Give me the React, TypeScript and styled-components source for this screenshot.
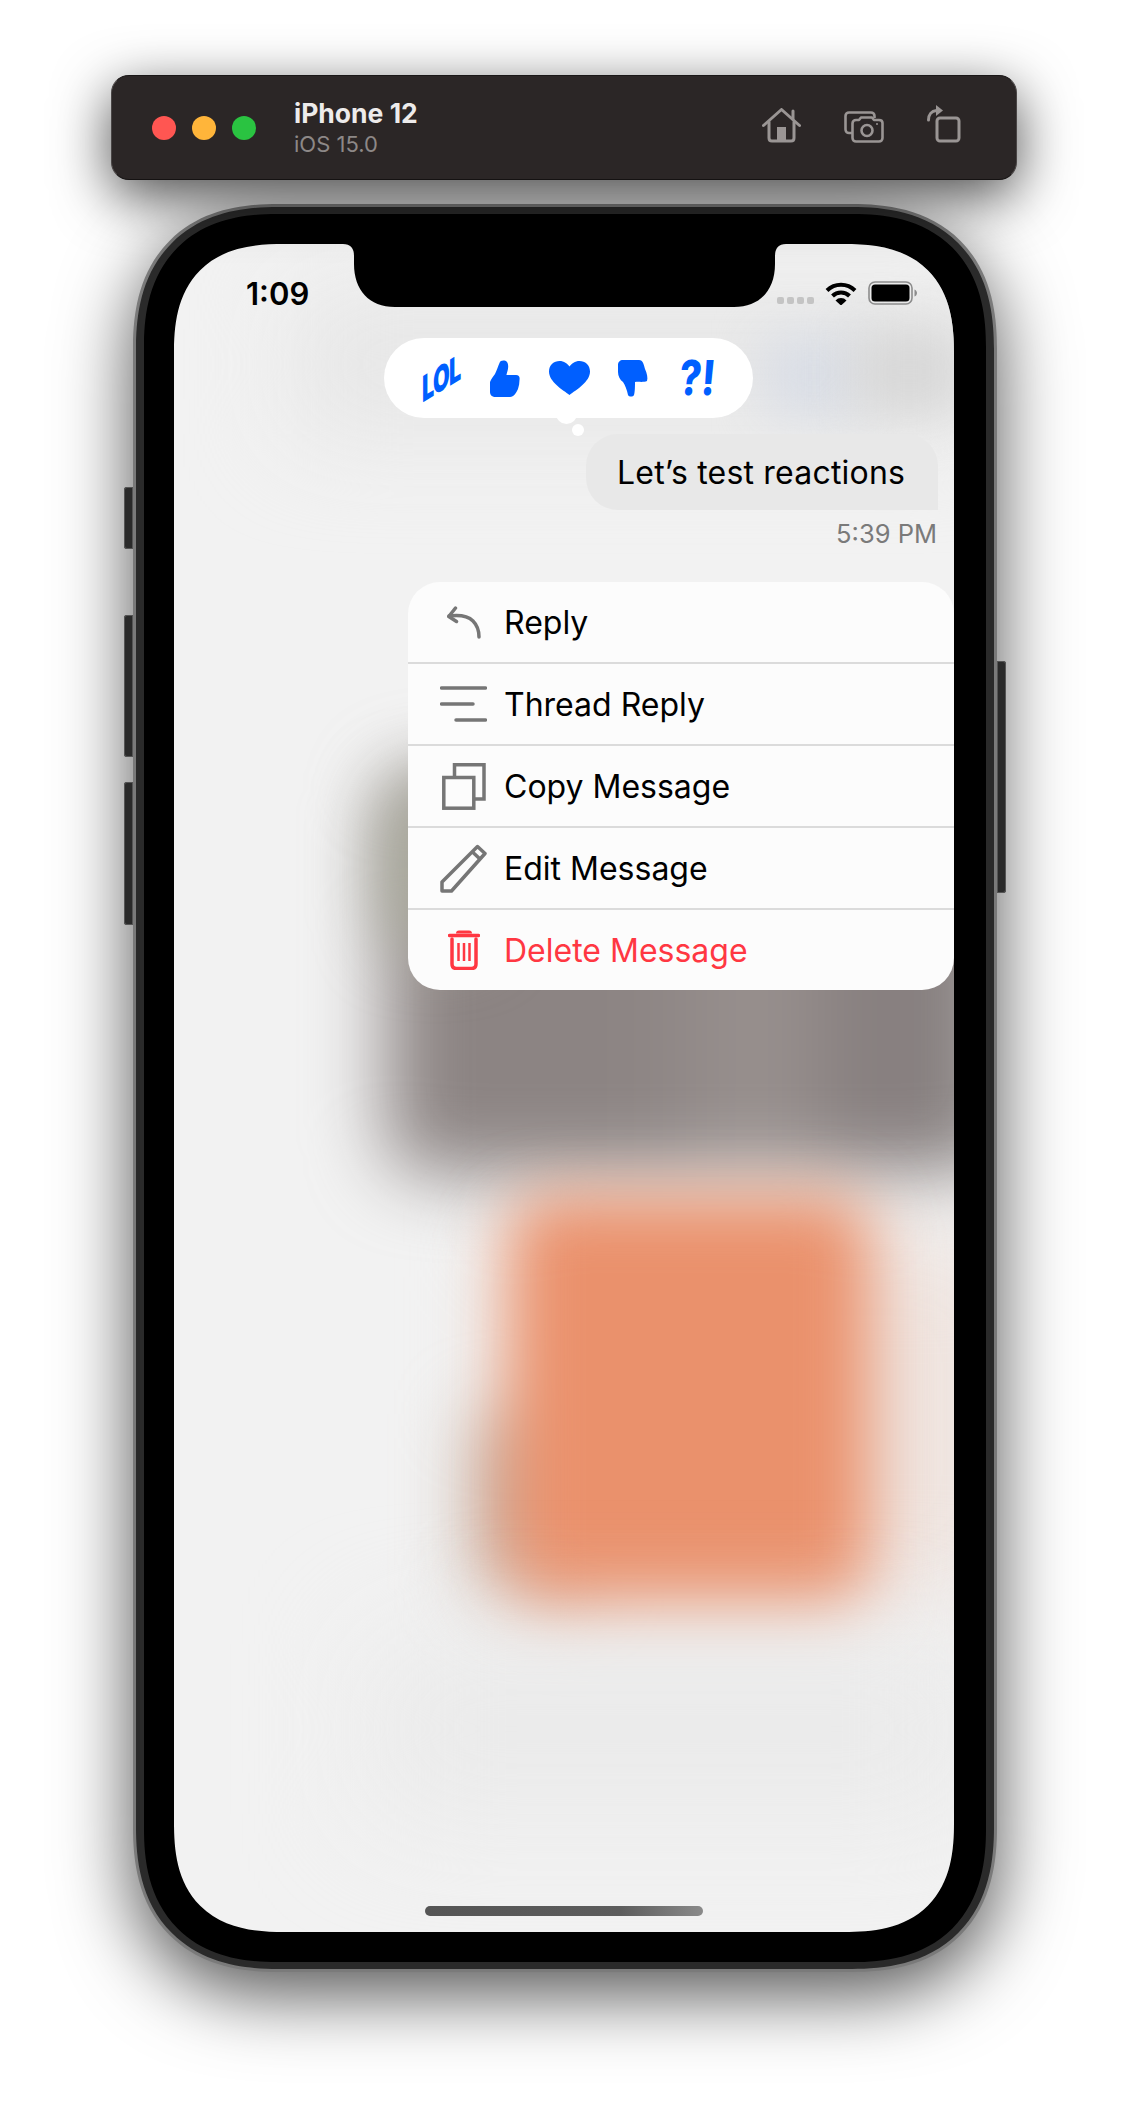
import styled, {createGlobalStyle} from 'styled-components';

const GlobalStyle = createGlobalStyle`
  html, body {
    margin: 0;
    padding: 0;
    background: #FFFFFF;
  }
  body {
    width: 1128px;
    height: 2124px;
    overflow: hidden;
    font-family: Inter, "Liberation Sans", sans-serif;
  }
`;

const menuItems = [
  {label: 'Reply', icon: <ReplyIcon />},
  {label: 'Thread Reply', icon: <ThreadIcon />},
  {label: 'Copy Message', icon: <CopyIcon />},
  {label: 'Edit Message', icon: <EditIcon />},
  {label: 'Delete Message', icon: <TrashIcon />, danger: true},
];

function HomeIcon() {
  return (
    <svg width="39" height="35" viewBox="0 0 39 35" fill="none" stroke="#9A9594" strokeWidth="3" strokeLinecap="round" strokeLinejoin="round">
      <path d="M1.5 17.5 19.5 1.5 37.5 17.5" />
      <path d="M31 3v8" />
      <path d="M7 14v16c0 2 1 3 3 3h19c2 0 3-1 3-3V14" />
      <path d="M15 19h9v14h-9z" fill="#9A9594" stroke="none" />
    </svg>
  );
}

function CameraIcon() {
  return (
    <svg width="40" height="32" viewBox="0 0 40 32" fill="none" stroke="#9A9594" strokeWidth="2.6" strokeLinejoin="round">
      <path d="M8 22H5c-2 0-3.5-1.5-3.500-3.500V5C1.500 3 3 1.500 5 1.500h22c2 0 3.500 1.500 3.500 3.500v2" />
      <path d="M12 9h3l2-2.500h11l2 2.500h5c2 0 3.500 1 3.500 3v15c0 2-1.500 3.500-3.500 3.500H12c-2 0-3.500-1.500-3.500-3.500V12.500C8.500 10.500 10 9 12 9z" />
      <circle cx="23" cy="19.500" r="5.500" />
      <circle cx="33" cy="13" r="1" fill="#9A9594" stroke="none" />
    </svg>
  );
}

function RotateIcon() {
  return (
    <svg width="34" height="38" viewBox="0 0 34 38" fill="none" stroke="#9A9594" strokeWidth="3" strokeLinejoin="round">
      <rect x="10" y="13" width="22" height="23" rx="3" />
      <path d="M1.500 15c0-5 3-9 8-9.500" strokeLinecap="round" />
      <path d="M9 0l7 5.500-7 5.500z" fill="#9A9594" stroke="none" />
    </svg>
  );
}

function WifiIcon() {
  return (
    <svg width="32" height="24" viewBox="0 0 32 24" fill="none" stroke="#000000" strokeWidth="4">
      <path d="M2 9.500a20 20 0 0 1 28 0" />
      <path d="M7.500 15a12 12 0 0 1 17 0" />
      <path d="M10.500 19.500a7.500 7.500 0 0 1 11 0L16 24.500z" fill="#000000" stroke="none" />
    </svg>
  );
}

function BatteryIcon() {
  return (
    <svg width="49" height="24" viewBox="0 0 49 24" fill="none">
      <rect x="1" y="1" width="43" height="22" rx="6" stroke="#8C8C8C" strokeWidth="1.600" />
      <rect x="3.500" y="3.500" width="38" height="17" rx="3.500" fill="#000000" />
      <path d="M46.500 8.500c1.500.5 2.500 2 2.500 3.500s-1 3-2.500 3.500z" fill="#8C8C8C" />
    </svg>
  );
}

function ThumbUpIcon() {
  return (
    <svg width="30" height="37" viewBox="0 0 30 37" fill="#005FFF">
      <path d="M0 22C1 19 3 17 5 14C7 10 8 6 9.500 3C10.500 0 15 0 17 2C18.500 4 18.500 8 17.500 11C17 13 16.500 14 16.500 15H26C29 15 30 17 29.500 20C29.500 23 29 26 28 29C26 33 24 37 20 37H6C2 37 0 35 0 32Z" />
    </svg>
  );
}

function HeartIcon() {
  return (
    <svg width="41" height="34" viewBox="0 0 41 34" fill="#005FFF">
      <path d="M20.500 34C14 29 0 21 0 10.500C0 4 5 0 10.500 0C15 0 18.500 2.500 20.500 5.500C22.500 2.500 26 0 30.500 0C36 0 41 4 41 10.500C41 21 27 29 20.500 34Z" />
    </svg>
  );
}

function ThumbDownIcon() {
  return (
    <svg width="30" height="37" viewBox="0 0 30 37" fill="#005FFF">
      <path d="M5 0H21C25 0 26 5 27 9C29 13 30 18 29 21C26 22.500 21 21.500 17 22C17 26 17 32 16 35C15 37 11 37 10 35C9 30 7 25 5 22C2 20 0 16 0 12V5C0 2 2 0 5 0Z" />
    </svg>
  );
}

function ReplyIcon() {
  return (
    <svg width="34" height="33" viewBox="0 0 34 33" fill="none" stroke="#767676" strokeWidth="3.500" strokeLinecap="round" strokeLinejoin="round">
      <path d="M8.500 2 1.800 10.500 9.500 15.500" />
      <path d="M2 10C10 9 20 9 26 15C30 19 32 24 32 31" />
    </svg>
  );
}

function ThreadIcon() {
  return (
    <svg width="47" height="36" viewBox="0 0 47 36" fill="none" stroke="#767676" strokeWidth="3.500" strokeLinecap="round">
      <path d="M1.500 2H45.500" />
      <path d="M1.500 18H33" />
      <path d="M16 34H45.500" />
    </svg>
  );
}

function CopyIcon() {
  return (
    <svg width="44" height="47" viewBox="0 0 44 47" fill="none" stroke="#767676" strokeWidth="3.500">
      <path d="M12.500 13V1.800H42V36H33" />
      <rect x="1.800" y="14.500" width="30" height="30.700" />
    </svg>
  );
}

function EditIcon() {
  return (
    <svg width="47" height="49" viewBox="0 0 47 49" fill="none" stroke="#767676" strokeWidth="3.500" strokeLinejoin="round">
      <path d="M2 47V38L37.500 2.500 45 9.500 11.500 47Z" />
      <path d="M32.500 8 40.500 15.500" />
    </svg>
  );
}

function TrashIcon() {
  return (
    <svg width="32" height="40" viewBox="0 0 32 40" fill="none" stroke="#FF3742" strokeWidth="3.500" strokeLinecap="round">
      <path d="M8 3.500c0-2 1-3 3-3h10c2 0 3 1 3 3z" fill="#FF3742" stroke="none" />
      <path d="M1.500 5.500H30.500" />
      <path d="M4 9V34C4 37 6 38.500 8.500 38.500H23.500C26 38.500 28 37 28 34V9" />
      <path d="M10.500 13V31M16 13V31M21.500 13V31" strokeWidth="2.500" strokeLinecap="butt" />
    </svg>
  );
}

const App = () => (
  <Page>
    <GlobalStyle />
    <Toolbar>
      <Lights>
        <Light $color="#FF5652" />
        <Light $color="#FFB53A" />
        <Light $color="#2AC341" />
      </Lights>
      <DeviceInfo>
        <DeviceName>iPhone 12</DeviceName>
        <DeviceOs>iOS 15.0</DeviceOs>
      </DeviceInfo>
      <ToolbarActions>
        <HomeIcon />
        <CameraIcon />
        <RotateIcon />
      </ToolbarActions>
    </Toolbar>
    <Phone>
      <SideButton $side="left" $top={283} $height={62} />
      <SideButton $side="left" $top={411} $height={142} />
      <SideButton $side="left" $top={578} $height={143} />
      <SideButton $side="right" $top={457} $height={232} />
      <Band>
        <Bezel>
          <Screen>
            <BlurTop />
            <BlurBlue />
            <BlurGray />
            <BlurDark />
            <BlurOlive />
            <BlurPeach />
            <BlurTaupe />
            <BlurOrange />
            <BlurFloor />
            <Notch width="443" height="63" viewBox="0 0 443 63">
              <path d="M0 0Q11 0 11 12V20C11 46 26 63 52 63H391C417 63 432 46 432 20V12Q432 0 443 0Z" fill="#000000" />
            </Notch>
            <StatusBar>
              <Clock>1:09</Clock>
              <StatusIcons>
                <SignalDots>
                  <SignalDot />
                  <SignalDot />
                  <SignalDot />
                  <SignalDot />
                </SignalDots>
                <WifiIcon />
                <BatteryIcon />
              </StatusIcons>
            </StatusBar>
            <ReactionBar>
              <ReactionSlot><LolText>LOL</LolText></ReactionSlot>
              <ReactionSlot><ThumbUpIcon /></ReactionSlot>
              <ReactionSlot><HeartIcon /></ReactionSlot>
              <ReactionSlot><ThumbDownIcon /></ReactionSlot>
              <ReactionSlot><WowText>?!</WowText></ReactionSlot>
            </ReactionBar>
            <Bubble>Let’s test reactions</Bubble>
            <Timestamp>5:39 PM</Timestamp>
            <Menu>
              {menuItems.map(item => (
                <MenuRow key={item.label}>
                  <MenuIcon>{item.icon}</MenuIcon>
                  <MenuLabel $danger={item.danger}>{item.label}</MenuLabel>
                </MenuRow>
              ))}
            </Menu>
            <HomeIndicator />
          </Screen>
        </Bezel>
      </Band>
    </Phone>
  </Page>
);

export default App;

const Page = styled.div`
  width: 1128px;
  height: 2124px;
  padding-top: 75px;
  box-sizing: border-box;
  display: flex;
  flex-direction: column;
  align-items: center;
  background: #FFFFFF;
  overflow: hidden;
`;

const Toolbar = styled.div`
  position: relative;
  z-index: 2;
  width: 906px;
  height: 105px;
  box-sizing: border-box;
  padding: 0 55px 0 40px;
  display: flex;
  align-items: center;
  background: #2B2626;
  border-radius: 18px;
  border: 1px solid #4A4646;
  border-top-color: #1A1717;
  border-bottom-color: #151212;
  box-shadow: 0 16px 56px rgba(0, 0, 0, 0.7);
`;

const Lights = styled.div`
  display: flex;
  gap: 16px;
`;

const Light = styled.span<{$color: string}>`
  width: 24px;
  height: 24px;
  border-radius: 50%;
  background: ${props => props.$color};
`;

const DeviceInfo = styled.div`
  margin-left: 38px;
  display: flex;
  flex-direction: column;
  gap: 3px;
`;

const DeviceName = styled.span`
  font-weight: 700;
  font-size: 26.500px;
  line-height: 30px;
  color: #EDEBEB;
`;

const DeviceOs = styled.span`
  font-weight: 400;
  font-size: 22px;
  line-height: 26px;
  color: #8D8887;
`;

const ToolbarActions = styled.div`
  margin-left: auto;
  display: flex;
  align-items: flex-end;
  gap: 43px;
  padding-bottom: 7px;
`;

const Phone = styled.div`
  position: relative;
  margin: 24px 0 0 2px;
  padding: 3px;
  background: #7A7A7A;
  border-radius: 145px;
  corner-shape: superellipse(1.25);
  box-shadow: 0 22px 74px rgba(0, 0, 0, 0.68);
`;

const SideButton = styled.span<{$side: string; $top: number; $height: number}>`
  position: absolute;
  ${props => props.$side}: -9px;
  top: ${props => props.$top}px;
  width: 9px;
  height: ${props => props.$height}px;
  background: #2A2A2A;
  border-radius: ${props => (props.$side === 'left' ? '3px 0 0 3px' : '0 3px 3px 0')};
  box-shadow: inset 0 0 0 1px #555555;
`;

const Band = styled.div`
  padding: 7px 8px 7px 8px;
  background: #2A2A2A;
  border-radius: 142px;
  corner-shape: superellipse(1.25);
`;

const Bezel = styled.div`
  padding: 30px 32px 30px 30px;
  background: #000000;
  border-radius: 133px;
  corner-shape: superellipse(1.25);
`;

const Screen = styled.div`
  position: relative;
  width: 780px;
  height: 1688px;
  display: flex;
  flex-direction: column;
  background: #F2F2F2;
  border-radius: 110px;
  corner-shape: superellipse(1.35);
  overflow: hidden;
`;

const Blur = styled.div`
  position: absolute;
`;

const BlurTop = styled(Blur)`
  left: 120px;
  top: 50px;
  width: 700px;
  height: 140px;
  background: #E6E6E6;
  filter: blur(50px);
`;

const BlurBlue = styled(Blur)`
  left: 590px;
  top: 92px;
  width: 100px;
  height: 80px;
  background: #DADEE6;
  filter: blur(24px);
`;

const BlurGray = styled(Blur)`
  left: 680px;
  top: 85px;
  width: 110px;
  height: 85px;
  background: #D8D8D8;
  filter: blur(24px);
`;

const BlurDark = styled(Blur)`
  left: 212px;
  top: 530px;
  width: 618px;
  height: 400px;
  border-radius: 40px;
  background: linear-gradient(90deg, #8C8483 0%, #8C8483 40%, #9A9290 62%, #857D7D 78%, #8C8685 100%);
  filter: blur(38px);
`;

const BlurOlive = styled(Blur)`
  left: 212px;
  top: 540px;
  width: 100px;
  height: 160px;
  border-radius: 30px;
  background: #ACAD9E;
  filter: blur(34px);
`;

const BlurPeach = styled(Blur)`
  left: 340px;
  top: 1000px;
  width: 500px;
  height: 350px;
  background: #EFE4DF;
  filter: blur(50px);
`;

const BlurTaupe = styled(Blur)`
  left: 300px;
  top: 1170px;
  width: 110px;
  height: 175px;
  background: #C6AEA0;
  filter: blur(36px);
`;

const BlurOrange = styled(Blur)`
  left: 335px;
  top: 952px;
  width: 361px;
  height: 414px;
  background: #EA916C;
  border-radius: 40px;
  filter: blur(32px);
`;

const BlurFloor = styled(Blur)`
  left: 200px;
  top: 1400px;
  width: 600px;
  height: 170px;
  background: #EAEAEA;
  filter: blur(60px);
`;

const Notch = styled.svg`
  position: absolute;
  left: 169px;
  top: 0;
`;

const StatusBar = styled.div`
  position: relative;
  height: 94px;
  box-sizing: border-box;
  padding: 33px 37px 0 72px;
  display: flex;
  justify-content: space-between;
  align-items: flex-start;
`;

const Clock = styled.span`
  font-weight: 600;
  font-size: 31px;
  line-height: 34px;
  color: #000000;
`;

const StatusIcons = styled.div`
  margin-top: 4px;
  display: flex;
  align-items: flex-end;
  gap: 11px;
`;

const SignalDots = styled.div`
  display: flex;
  gap: 3px;
  margin-bottom: 1px;
`;

const SignalDot = styled.span`
  width: 7px;
  height: 7px;
  border-radius: 2px;
  background: #C4C4C4;
`;

const ReactionBar = styled.div`
  position: relative;
  width: 369px;
  height: 80px;
  margin-left: 210px;
  padding-left: 25px;
  box-sizing: border-box;
  display: flex;
  align-items: center;
  background: #FFFFFF;
  border-radius: 40px;
  &::before {
    content: '';
    position: absolute;
    left: 172px;
    top: 65px;
    width: 21px;
    height: 21px;
    border-radius: 50%;
    background: #FFFFFF;
  }
  &::after {
    content: '';
    position: absolute;
    left: 188px;
    top: 86px;
    width: 12px;
    height: 12px;
    border-radius: 50%;
    background: #FFFFFF;
  }
`;

const ReactionSlot = styled.div`
  width: 64px;
  display: flex;
  justify-content: center;
`;

const LolText = styled.span`
  font-weight: 900;
  font-size: 36px;
  line-height: 40px;
  color: #005FFF;
  letter-spacing: -1px;
  transform: scaleX(0.6) skewY(-20deg);
`;

const WowText = styled.span`
  font-weight: 800;
  font-size: 48px;
  line-height: 40px;
  color: #005FFF;
  transform: scaleX(0.8) skewX(-6deg);
`;

const Bubble = styled.div`
  align-self: flex-end;
  position: relative;
  margin: 16px 16px 0 0;
  width: 352px;
  height: 76px;
  box-sizing: border-box;
  padding-left: 31px;
  display: flex;
  align-items: center;
  background: #E8E8E8;
  border-radius: 32px 32px 0 32px;
  font-size: 32px;
  letter-spacing: 0.2px;
  color: #000000;
  white-space: nowrap;
`;

const Timestamp = styled.div`
  align-self: flex-end;
  position: relative;
  margin: 7px 17px 0 0;
  font-size: 25.500px;
  line-height: 33px;
  color: #7A7A7A;
`;

const Menu = styled.div`
  align-self: flex-end;
  position: relative;
  width: 546px;
  margin-top: 32px;
  background: #FCFCFC;
  border-radius: 32px;
  overflow: hidden;
`;

const MenuRow = styled.div`
  height: 82px;
  box-sizing: border-box;
  display: flex;
  align-items: center;
  border-bottom: 2px solid #DBDBDB;
  &:last-child {
    height: 80px;
    border-bottom: none;
  }
`;

const MenuIcon = styled.div`
  width: 47px;
  margin: 0 17px 0 32px;
  flex-shrink: 0;
  display: flex;
  justify-content: center;
`;

const MenuLabel = styled.span<{$danger?: boolean}>`
  font-size: 32px;
  color: ${props => (props.$danger ? '#FF3742' : '#000000')};
`;

const HomeIndicator = styled.div`
  position: relative;
  align-self: center;
  width: 278px;
  height: 10px;
  margin: auto 0 16px;
  border-radius: 5px;
  background: linear-gradient(90deg, #555555 0%, #5C5C5C 70%, #8A8A8A 100%);
`;
